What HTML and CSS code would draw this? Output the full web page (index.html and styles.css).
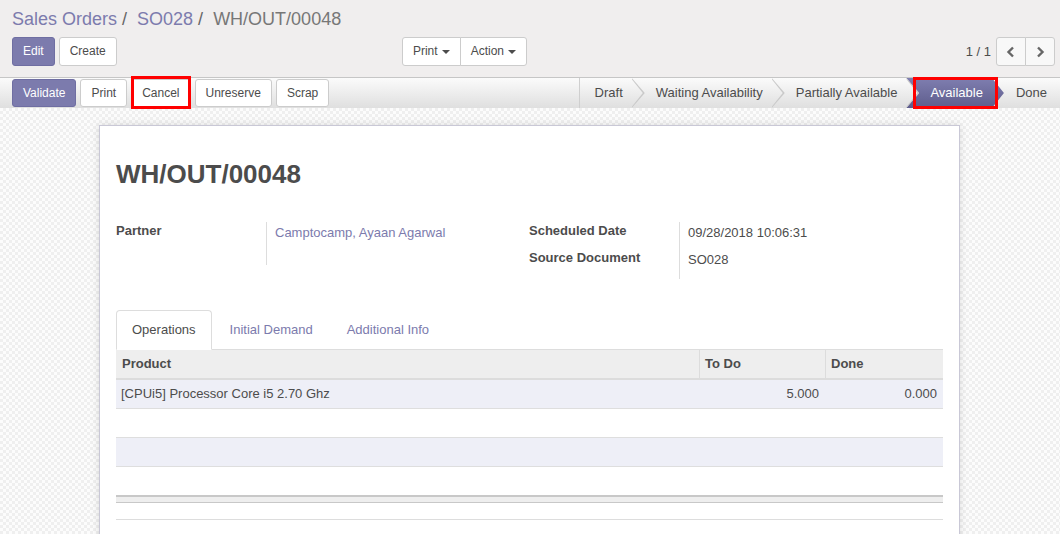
FILE: index.html
```html
<!DOCTYPE html>
<html>
<head>
<meta charset="utf-8">
<link rel="stylesheet" href="styles.css">
</head>
<body>
<div class="cp">
  <div class="breadcrumb">
    <a class="crumb-link">Sales Orders</a><span class="crumb-sep">/</span>
    <a class="crumb-link">SO028</a><span class="crumb-sep">/</span>
    <span class="crumb-active">WH/OUT/00048</span>
  </div>
  <div class="cp-row">
    <div class="cp-left">
      <div class="cp-buttons">
        <button class="btn btn-primary">Edit</button>
        <button class="btn">Create</button>
      </div>
      <div class="btn-group">
        <button class="btn btn-grp">Print<span class="caret"></span></button>
        <button class="btn btn-grp">Action<span class="caret"></span></button>
      </div>
    </div>
    <div class="cp-right">
      <span class="pager-value">1 / 1</span>
      <div class="btn-group">
        <button class="btn btn-grp pager-btn"><svg width="10" height="12" viewBox="0 0 10 12"><polyline points="7,1.5 2.5,6 7,10.5" fill="none" stroke="#666" stroke-width="2.4"/></svg></button>
        <button class="btn btn-grp pager-btn"><svg width="10" height="12" viewBox="0 0 10 12"><polyline points="3,1.5 7.5,6 3,10.5" fill="none" stroke="#666" stroke-width="2.4"/></svg></button>
      </div>
    </div>
  </div>
</div>

<div class="statusbar">
  <div class="sb-buttons">
    <button class="btn sb-btn btn-primary">Validate</button>
    <button class="btn sb-btn">Print</button>
    <button class="btn sb-btn mark-wrap">Cancel<span class="mark mark-cancel"></span></button>
    <button class="btn sb-btn">Unreserve</button>
    <button class="btn sb-btn">Scrap</button>
  </div>
  <div class="sb-status">
    <div class="state first">Draft</div>
    <div class="state">Waiting Availability</div>
    <div class="state">Partially Available</div>
    <div class="state active"><span class="state-text">Available</span><span class="mark mark-avail"></span></div>
    <div class="state last">Done</div>
  </div>
</div>

<div class="form-bg">
  <div class="sheet">
    <h1 class="title">WH/OUT/00048</h1>
    <div class="groups">
      <div class="group">
        <div class="label">Partner</div>
        <div class="value partner"><a class="link">Camptocamp, Ayaan Agarwal</a></div>
      </div>
      <div class="group">
        <div class="label">Scheduled Date</div>
        <div class="value">09/28/2018 10:06:31</div>
        <div class="label">Source Document</div>
        <div class="value last">SO028</div>
      </div>
    </div>

    <div class="notebook">
      <div class="tabs">
        <div class="tab active">Operations</div>
        <div class="tab">Initial Demand</div>
        <div class="tab">Additional Info</div>
      </div>
      <div class="list">
        <div class="list-row head">
          <div class="cell">Product</div>
          <div class="cell">To Do</div>
          <div class="cell">Done</div>
        </div>
        <div class="list-row odd">
          <div class="cell">[CPUi5] Processor Core i5 2.70 Ghz</div>
          <div class="cell num">5.000</div>
          <div class="cell num">0.000</div>
        </div>
        <div class="list-row"><div class="cell"></div><div class="cell"></div><div class="cell"></div></div>
        <div class="list-row odd"><div class="cell"></div><div class="cell"></div><div class="cell"></div></div>
        <div class="list-row lastrow"><div class="cell"></div><div class="cell"></div><div class="cell"></div></div>
        <div class="list-foot"></div>
      </div>
      <div class="after-line"></div>
    </div>
  </div>
</div>
</body>
</html>
```

FILE: styles.css
```css
* { box-sizing: border-box; }
html, body { margin: 0; padding: 0; }
body {
  width: 1060px;
  height: 534px;
  overflow: hidden;
  font-family: "Liberation Sans", Arial, sans-serif;
  font-size: 13px;
  color: #4c4c4c;
  background: #f7f7f7;
}
button { font-family: inherit; }

/* control panel */
.cp {
  background: #f0eeee;
  height: 77px;
  padding: 8px 5px 0 12px;
}
.breadcrumb {
  display: flex;
  font-size: 18px;
  line-height: 22px;
  white-space: nowrap;
}
.crumb-link { color: #7c7bad; text-decoration: none; }
.crumb-sep { color: #666; margin: 0 10px 0 5px; }
.crumb-active { color: #777; }

.cp-row {
  display: flex;
  align-items: center;
  margin-top: 7px;
  height: 29px;
}
.cp-left {
  width: 515px;
  display: flex;
  justify-content: space-between;
}
.cp-buttons { display: flex; gap: 4px; }
.cp-right {
  flex: 1;
  display: flex;
  justify-content: flex-end;
  align-items: center;
}
.pager-value { font-size: 13px; margin-right: 5px; color: #4c4c4c; }

.btn {
  height: 29px;
  padding: 0 10px;
  font-size: 12px;
  line-height: 27px;
  border: 1px solid #ccc;
  background: #fff;
  color: #4c4c4c;
  border-radius: 3px;
  white-space: nowrap;
  cursor: pointer;
}
.btn-primary {
  background: #7c7bad;
  border-color: #6f6ea2;
  color: #fff;
}
.btn-group { display: flex; }
.btn-grp { border-radius: 0; }
.btn-group .btn-grp:first-child { border-radius: 3px 0 0 3px; }
.btn-group .btn-grp:last-child { border-radius: 0 3px 3px 0; margin-left: -1px; }
.caret {
  display: inline-block;
  width: 0;
  height: 0;
  margin-left: 4px;
  vertical-align: middle;
  border-top: 4px solid #4c4c4c;
  border-left: 4px solid transparent;
  border-right: 4px solid transparent;
}
.pager-btn {
  width: 30px;
  padding: 0;
  background: #f8f8f8;
  display: flex;
  align-items: center;
  justify-content: center;
}

/* statusbar */
.statusbar {
  display: flex;
  justify-content: space-between;
  height: 31px;
  border-top: 1px solid #c6c6c6;
  background: linear-gradient(#fbfbfb, #dfdfdf);
  padding-left: 12px;
}
.sb-buttons { display: flex; gap: 4px; padding-top: 1px; }
.sb-btn { height: 28px; line-height: 26px; }
.mark-wrap { position: relative; }
.mark {
  position: absolute;
  border: 3px solid #f00;
  pointer-events: none;
  z-index: 5;
}
.mark-cancel { left: -1px; right: -1px; top: -4px; bottom: -3px; }

.sb-status {
  display: flex;
  height: 30px;
  border-left: 1px solid #cfcfcf;
}
.state {
  position: relative;
  height: 30px;
  line-height: 30px;
  font-size: 13px;
  padding: 0 9px 0 24px;
  white-space: nowrap;
  color: #4c4c4c;
}
.state.first { padding-left: 15px; }
.state.last { padding-right: 13px; }
.state:not(.last):not(.active)::before,
.state:not(.last):not(.active)::after {
  content: "";
  position: absolute;
  top: 0;
  bottom: 0;
  clip-path: polygon(0 0, 100% 50%, 0 100%);
  z-index: 2;
}
.state:not(.last):not(.active)::before {
  left: 100%;
  width: 13px;
  background: #c9c9c9;
}
.state:not(.last):not(.active)::after {
  left: 100%;
  width: 12px;
  margin-left: -1px;
  background: linear-gradient(#fbfbfb, #dfdfdf);
}
.state.active { color: #fff; }
.state.active::before {
  content: "";
  position: absolute;
  left: 0;
  top: 0;
  bottom: 0;
  right: -12px;
  background: linear-gradient(#7f7eb0, #5e5d8c);
  clip-path: polygon(0 0, calc(100% - 12px) 0, 100% 50%, calc(100% - 12px) 100%, 0 100%, 12px 50%);
  z-index: 1;
}
.state-text { position: relative; z-index: 3; }
.mark-avail { left: 7px; right: -6px; top: -1px; bottom: -1px; }

/* form */
.form-bg {
  height: 426px;
  padding-top: 17px;
  background-color: #f7f7f7;
  background-image: repeating-conic-gradient(#efefef 0 25%, #fcfcfc 0 50%);
  background-size: 6px 6px;
}
.sheet {
  width: 861px;
  margin-left: 99px;
  min-height: 420px;
  background: #fff;
  border: 1px solid #c9c8d6;
  box-shadow: 0 0 8px rgba(0, 0, 0, 0.12);
  padding: 24px 16px 0 16px;
}
.title {
  margin: 9px 0 0 0;
  font-size: 26px;
  line-height: 30px;
  font-weight: bold;
  color: #4c4c4c;
}
.groups {
  display: grid;
  grid-template-columns: 413px 413px;
  margin-top: 33px;
}
.group {
  display: grid;
  grid-template-columns: 150px 1fr;
  align-content: start;
}
.label {
  font-weight: bold;
  line-height: 18px;
  height: 27px;
}
.value {
  border-left: 1px solid #ddd;
  padding: 2px 0 0 8px;
  line-height: 18px;
  height: 27px;
}
.value.last { height: 30px; }
.value.partner { height: 43px; }
.link { color: #7c7bad; text-decoration: none; }

.notebook { margin-top: 31px; }
.tabs {
  display: flex;
  border-bottom: 1px solid #ddd;
  height: 40px;
}
.tab {
  height: 40px;
  padding: 10px 15px;
  line-height: 18px;
  border: 1px solid transparent;
  border-radius: 4px 4px 0 0;
  margin-right: 2px;
  color: #7c7bad;
  white-space: nowrap;
}
.tab.active {
  color: #4c4c4c;
  border-color: #ddd;
  border-bottom-color: #fff;
  background: #fff;
}

.list-row {
  display: grid;
  grid-template-columns: 583px 126px 1fr;
  height: 29px;
  border-bottom: 1px solid #dedede;
}
.list-row.head {
  height: 30px;
  background: #eeeeee;
  border-bottom: 2px solid #dcdcdc;
  font-weight: bold;
}
.list-row.head .cell { line-height: 28px; padding: 0 5px 0 6px; }
.list-row.head .cell + .cell { border-left: 1px solid #dcdcdc; padding-left: 5px; }
.list-row.odd { background: #eeeff7; }
.list-row.lastrow { height: 28px; border-bottom: none; }
.cell {
  line-height: 28px;
  padding: 0 5px;
  white-space: nowrap;
  overflow: hidden;
}
.cell.num { text-align: right; }
.list-row .cell.num:nth-child(2) { padding-right: 6px; }
.list-row .cell.num:nth-child(3) { padding-right: 6px; }
.list-foot {
  height: 8px;
  background: #eeeeee;
  border-top: 2px solid #c8c8c8;
  border-bottom: 1px solid #c8c8c8;
}
.after-line {
  margin-top: 16px;
  border-top: 1px solid #dddddd;
}
```
